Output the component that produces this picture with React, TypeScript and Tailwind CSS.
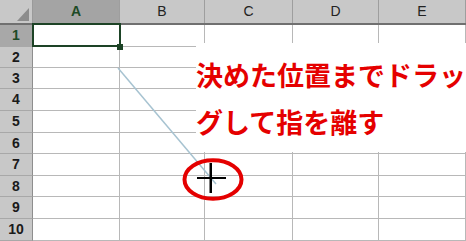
import React from 'react';

const columns = [
  { label: 'A', width: 'w-[87px]', selected: true },
  { label: 'B', width: 'w-[85px]', selected: false },
  { label: 'C', width: 'w-[88px]', selected: false },
  { label: 'D', width: 'w-[86px]', selected: false },
  { label: 'E', width: 'w-[87px]', selected: false },
];

// row heights include the 1px bottom grid line
const rows = [
  { n: 1, h: 'h-[22px]' },
  { n: 2, h: 'h-[21px]' },
  { n: 3, h: 'h-[21px]' },
  { n: 4, h: 'h-[22px]' },
  { n: 5, h: 'h-[22px]' },
  { n: 6, h: 'h-[21px]' },
  { n: 7, h: 'h-[22px]' },
  { n: 8, h: 'h-[21px]' },
  { n: 9, h: 'h-[22px]' },
  { n: 10, h: 'h-[22px]' },
];

const App: React.FC = () => {
  return (
    <div className="relative w-[466px] h-[241px] overflow-hidden bg-white font-['Liberation_Sans',Arial,sans-serif]">
      {/* column headers */}
      <div className="flex h-[25px] border-b-2 border-[#707070] bg-[#c8c8c8]">
        <div className="relative w-[33px] shrink-0 border-r border-[#9a9a9a]">
          <svg className="absolute left-[17px] top-[8px]" width="12" height="13" viewBox="0 0 12 13">
            <polygon points="12,0 12,13 0,13" fill="#8c8c8c" />
          </svg>
        </div>
        {columns.map((col) => (
          <div
            key={col.label}
            className={`${col.width} shrink-0 flex items-center justify-center border-r border-[#9e9e9e] text-[14px] ${
              col.selected ? 'bg-[#a4a4a4] text-[#1d4a26] font-bold' : 'text-[#222]'
            }`}
          >
            {col.label}
          </div>
        ))}
      </div>

      {/* body rows */}
      {rows.map((row) => (
        <div key={row.n} className={`flex ${row.h}`}>
          <div
            className={`w-[33px] shrink-0 flex items-center justify-center border-r border-b border-r-[#8e8e8e] border-b-[#a8a8a8] text-[14px] font-semibold ${
              row.n === 1 ? 'bg-[#a8a8a8] text-[#1d4a26]' : 'bg-[#c8c8c8] text-[#1a1a1a]'
            }`}
          >
            {row.n}
          </div>
          {columns.map((col, i) => (
            <div
              key={col.label}
              className={`relative ${col.width} shrink-0 border-r border-b border-[#b8b8b8]`}
            >
              {row.n === 1 && i === 0 && (
                <>
                  <div className="absolute left-[-1px] top-[-2px] w-[89px] h-[24px] border-2 border-[#1d4326] z-10" />
                  <div className="absolute left-[84px] top-[19px] w-[6px] h-[6px] bg-[#1d4326] z-10" />
                </>
              )}
            </div>
          ))}
        </div>
      ))}

      {/* drag path */}
      <svg className="absolute left-0 top-0" width="466" height="241">
        <line x1="118" y1="68" x2="216" y2="184" stroke="#a7c3d1" strokeWidth="1.5" />
      </svg>

      {/* caption */}
      <div className="absolute left-[196px] top-[43px] w-[270px] h-[109px] bg-white pt-[8px] text-[27px] leading-[47px] font-bold text-[#e50000] whitespace-nowrap font-['Noto_Sans_CJK_JP',sans-serif]">
        <div>決めた位置までドラッ</div>
        <div>グして指を離す</div>
      </div>

      {/* cursor + highlight */}
      <svg className="absolute left-0 top-0" width="466" height="241">
        <ellipse cx="213" cy="179.5" rx="28.5" ry="19.3" fill="none" stroke="#e40000" strokeWidth="4" />
        <rect x="197" y="177" width="29" height="2" fill="#000" />
        <rect x="209.5" y="163" width="2.5" height="30" fill="#000" />
      </svg>
    </div>
  );
};

export default App;
